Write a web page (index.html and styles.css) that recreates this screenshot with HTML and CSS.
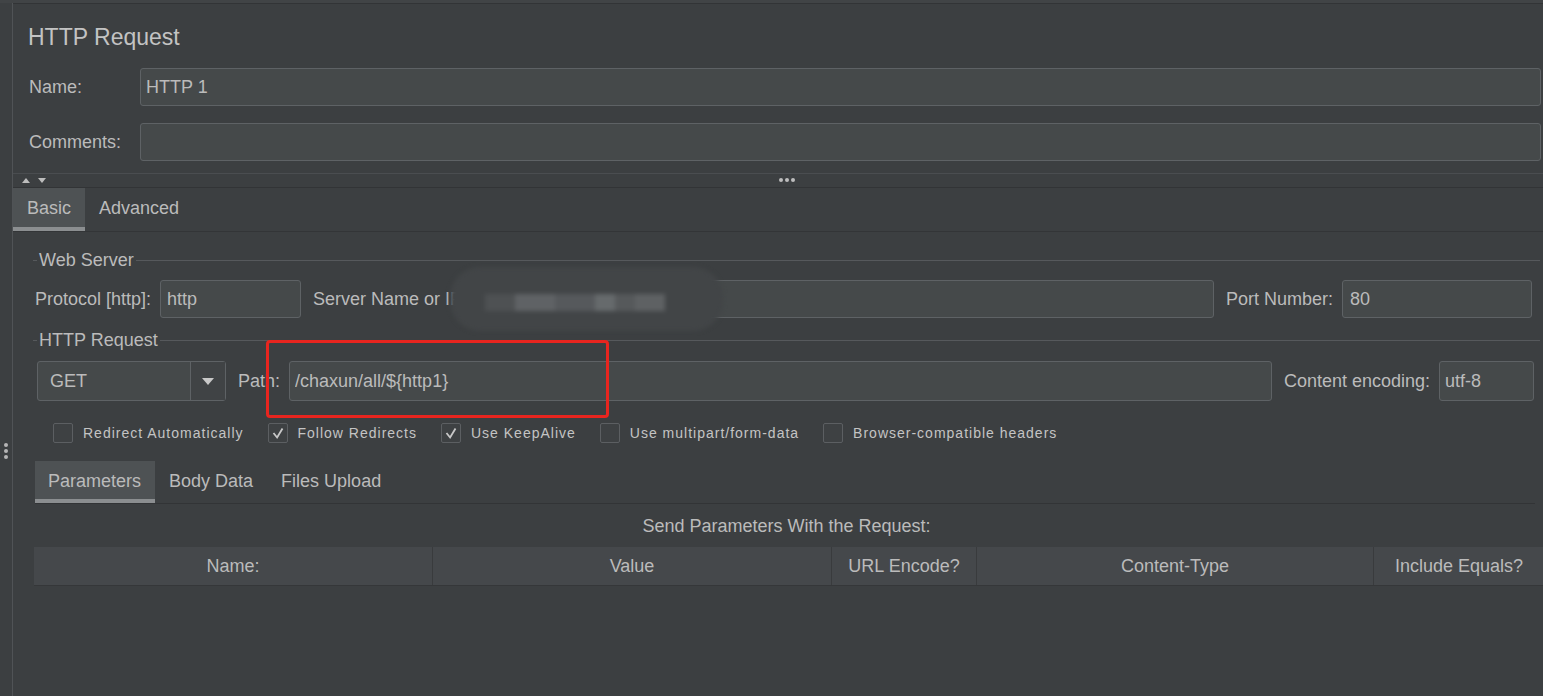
FILE: index.html
```html
<!DOCTYPE html>
<html lang="en">
<head>
    <meta charset="UTF-8">
    <title>HTTP Request</title>
    <link rel="stylesheet" href="styles.css">
</head>
<body>
    <div class="app">
        <div class="side"><span class="grip"></span></div>

        <div class="main">
            <div class="header">
                <h1 class="title">HTTP Request</h1>
                <div class="form-row">
                    <label for="name">Name:</label>
                    <input type="text" id="name" value="HTTP 1">
                </div>
                <div class="form-row">
                    <label for="comments">Comments:</label>
                    <input type="text" id="comments" value="">
                </div>
            </div>

            <div class="splitter">
                <span class="arrows"><span class="up"></span><span class="down"></span></span>
                <span class="dots"><i></i><i></i><i></i></span>
            </div>

            <div class="tabs">
                <div class="tab active">Basic</div>
                <div class="tab">Advanced</div>
            </div>

            <div class="panel">
                <div class="legend"><span>Web Server</span></div>
                <div class="field-row server-row">
                    <label>Protocol [http]:</label>
                    <input type="text" class="protocol" value="http">
                    <label class="gap">Server Name or IP:</label>
                    <input type="text" class="grow" value="">
                    <label class="gap">Port Number:</label>
                    <input type="text" class="port" value="80">
                </div>

                <div class="legend"><span>HTTP Request</span></div>
                <div class="field-row request-row">
                    <div class="combo">
                        <span class="combo-value">GET</span>
                        <span class="combo-arrow"></span>
                    </div>
                    <label class="gap">Path:</label>
                    <input type="text" class="grow path" value="/chaxun/all/${http1}">
                    <label class="gap">Content encoding:</label>
                    <input type="text" class="encoding" value="utf-8">
                </div>

                <div class="checks">
                    <div class="check"><span class="box"></span>Redirect Automatically</div>
                    <div class="check"><span class="box checked"><svg viewBox="0 0 20 20"><polyline points="5,10 9,15 15,5"/></svg></span>Follow Redirects</div>
                    <div class="check"><span class="box checked"><svg viewBox="0 0 20 20"><polyline points="5,10 9,15 15,5"/></svg></span>Use KeepAlive</div>
                    <div class="check"><span class="box"></span>Use multipart/form-data</div>
                    <div class="check"><span class="box"></span>Browser-compatible headers</div>
                </div>

                <div class="tabs sub-tabs">
                    <div class="tab active">Parameters</div>
                    <div class="tab">Body Data</div>
                    <div class="tab">Files Upload</div>
                </div>

                <div class="caption">Send Parameters With the Request:</div>

                <table class="params">
                    <thead>
                        <tr>
                            <th class="c-name">Name:</th>
                            <th class="c-value">Value</th>
                            <th class="c-enc">URL Encode?</th>
                            <th class="c-type">Content-Type</th>
                            <th class="c-eq">Include Equals?</th>
                        </tr>
                    </thead>
                </table>
            </div>
        </div>

        <div class="redact">
            <span class="px p1"></span><span class="px p2"></span><span class="px p3"></span><span class="px p4"></span><span class="px p5"></span><span class="px p6"></span>
        </div>
        <div class="highlight"></div>
    </div>
</body>
</html>
```

FILE: styles.css
```css
body {
    margin: 0;
    background-color: #3c3f41;
    font-family: "Liberation Sans", Arial, sans-serif;
    font-size: 18px;
    color: #bbbbbb;
}

.app {
    position: relative;
    display: flex;
    width: 1543px;
    height: 696px;
    overflow: hidden;
    border-top: 3px solid #414446;
    box-sizing: border-box;
}

.side {
    flex-shrink: 0;
    width: 13px;
    border-right: 1px solid #505356;
    display: flex;
    justify-content: center;
    padding: 440px 1px 0 0;
    box-sizing: border-box;
}

.grip {
    width: 4px;
    height: 4px;
    border-radius: 50%;
    background-color: #b5b5b5;
    box-shadow: 0 6px 0 #b5b5b5, 0 12px 0 #b5b5b5;
}

.main {
    flex: 1;
    min-width: 0;
    border-top: 1px solid #323436;
}

.header {
    padding: 0 2px 0 15px;
}

.title {
    margin: 19px 0 0;
    font-size: 23px;
    font-weight: normal;
    line-height: 28px;
    color: #c3c3c3;
}

.form-row {
    display: flex;
    align-items: center;
    height: 38px;
    margin-top: 17px;
}

.form-row label {
    width: 111px;
    padding-left: 1px;
}

input {
    font-family: "Liberation Sans", Arial, sans-serif;
    font-size: 18px;
    color: #bbbbbb;
    background-color: #45494a;
    border: 1px solid #5e6265;
    border-radius: 3px;
    padding: 0 5px;
    height: 38px;
    box-sizing: border-box;
    outline: none;
}

.form-row input {
    flex: 1;
}

.splitter {
    position: relative;
    margin-top: 12px;
    height: 13px;
    border-top: 1px solid #4a4d50;
    border-bottom: 1px solid #323436;
}

.arrows {
    position: absolute;
    left: 9px;
    top: 4px;
    display: flex;
    gap: 8px;
}

.up,
.down {
    width: 0;
    height: 0;
    border-left: 4px solid transparent;
    border-right: 4px solid transparent;
}

.up {
    border-bottom: 5px solid #bdbdbd;
}

.down {
    border-top: 5px solid #bdbdbd;
}

.dots {
    position: absolute;
    left: 766px;
    top: 4px;
    display: flex;
    gap: 2px;
}

.dots i {
    width: 4px;
    height: 4px;
    border-radius: 50%;
    background-color: #bdbdbd;
}

.tabs {
    display: flex;
    height: 43px;
    border-bottom: 1px solid #333537;
}

.tab {
    padding: 0 14px;
    line-height: 40px;
    border-bottom: 4px solid transparent;
}

.tab.active {
    background-color: #4e5254;
    border-bottom-color: #8b8e90;
}

.panel {
    padding: 17px 3px 0 20px;
}

.legend {
    display: flex;
    align-items: center;
    line-height: 22px;
}

.legend::before {
    content: "";
    width: 4px;
    border-top: 1px solid #56595c;
}

.legend::after {
    content: "";
    flex: 1;
    border-top: 1px solid #56595c;
}

.legend span {
    padding: 0 2px;
}

.field-row {
    display: flex;
    align-items: center;
    margin-top: 9px;
    margin-bottom: 11px;
}

.server-row {
    height: 38px;
    padding: 0 8px 0 2px;
}

.request-row {
    height: 40px;
    padding: 0 6px 0 4px;
    margin-top: 10px;
    margin-bottom: 20px;
}

.field-row input {
    margin-left: 9px;
}

.request-row input {
    height: 40px;
}

.gap {
    margin-left: 12px;
}

.protocol {
    width: 141px;
    padding-left: 6px;
}

.port {
    width: 190px;
    padding-left: 7px;
}

.grow {
    flex: 1;
}

.encoding {
    width: 95px;
}

.combo {
    display: flex;
    width: 189px;
    height: 40px;
    border: 1px solid #5e6265;
    border-radius: 3px;
    box-sizing: border-box;
    background-color: #45494a;
}

.combo-value {
    flex: 1;
    padding-left: 12px;
    line-height: 38px;
}

.combo-arrow {
    width: 34px;
    border-left: 1px solid #5e6265;
    background-color: #404345;
    display: flex;
    align-items: center;
    justify-content: center;
}

.combo-arrow::after {
    content: "";
    border-left: 6px solid transparent;
    border-right: 6px solid transparent;
    border-top: 7px solid #c8c8c8;
}

.checks {
    display: flex;
    align-items: center;
    height: 24px;
    padding-left: 20px;
    font-size: 14px;
    letter-spacing: 1px;
    color: #c4c4c4;
}

.check {
    display: flex;
    align-items: center;
    margin-right: 24px;
}

.box {
    width: 20px;
    height: 20px;
    border: 1px solid #5c5f62;
    border-radius: 2px;
    box-sizing: border-box;
    margin-right: 10px;
    background-color: #3e4143;
}

.box svg {
    display: block;
    width: 18px;
    height: 18px;
    fill: none;
    stroke: #c8c8c8;
    stroke-width: 2;
}

.sub-tabs {
    margin: 16px 5px 0 2px;
    height: 42px;
    border-bottom-color: #323436;
}

.sub-tabs .tab {
    line-height: 40px;
}

.sub-tabs .tab:first-child {
    padding: 0 14px 0 13px;
}

.caption {
    margin-top: 11px;
    line-height: 22px;
    text-align: center;
}

.params {
    margin: 10px 0 0 1px;
    width: 1506px;
    border-collapse: collapse;
    table-layout: fixed;
}

.params th {
    height: 38px;
    padding: 0;
    font-weight: normal;
    background-color: #45484b;
    border-left: 1px solid #393b3d;
    border-bottom: 1px solid #353739;
}

.params th:first-child {
    border-left: none;
}

.c-name { width: 398px; }
.c-value { width: 398px; }
.c-enc { width: 144px; }
.c-type { width: 396px; }
.c-eq { width: 170px; }

.redact {
    position: absolute;
    left: 450px;
    top: 264px;
    width: 273px;
    height: 64px;
    border-radius: 30px;
    background-color: #424547;
    filter: blur(2px);
}

.px {
    position: absolute;
    top: 27px;
    height: 17px;
}

.p1 { left: 35px; width: 30px; background-color: #4e5153; }
.p2 { left: 65px; width: 40px; background-color: #5f6265; }
.p3 { left: 105px; width: 40px; background-color: #56595c; }
.p4 { left: 145px; width: 20px; background-color: #666a6c; }
.p5 { left: 165px; width: 20px; background-color: #56595b; }
.p6 { left: 185px; width: 30px; background-color: #5e6163; }

.highlight {
    position: absolute;
    left: 266px;
    top: 337px;
    width: 343px;
    height: 78px;
    border: 3px solid #e8251f;
    border-radius: 4px;
    box-sizing: border-box;
}
```
